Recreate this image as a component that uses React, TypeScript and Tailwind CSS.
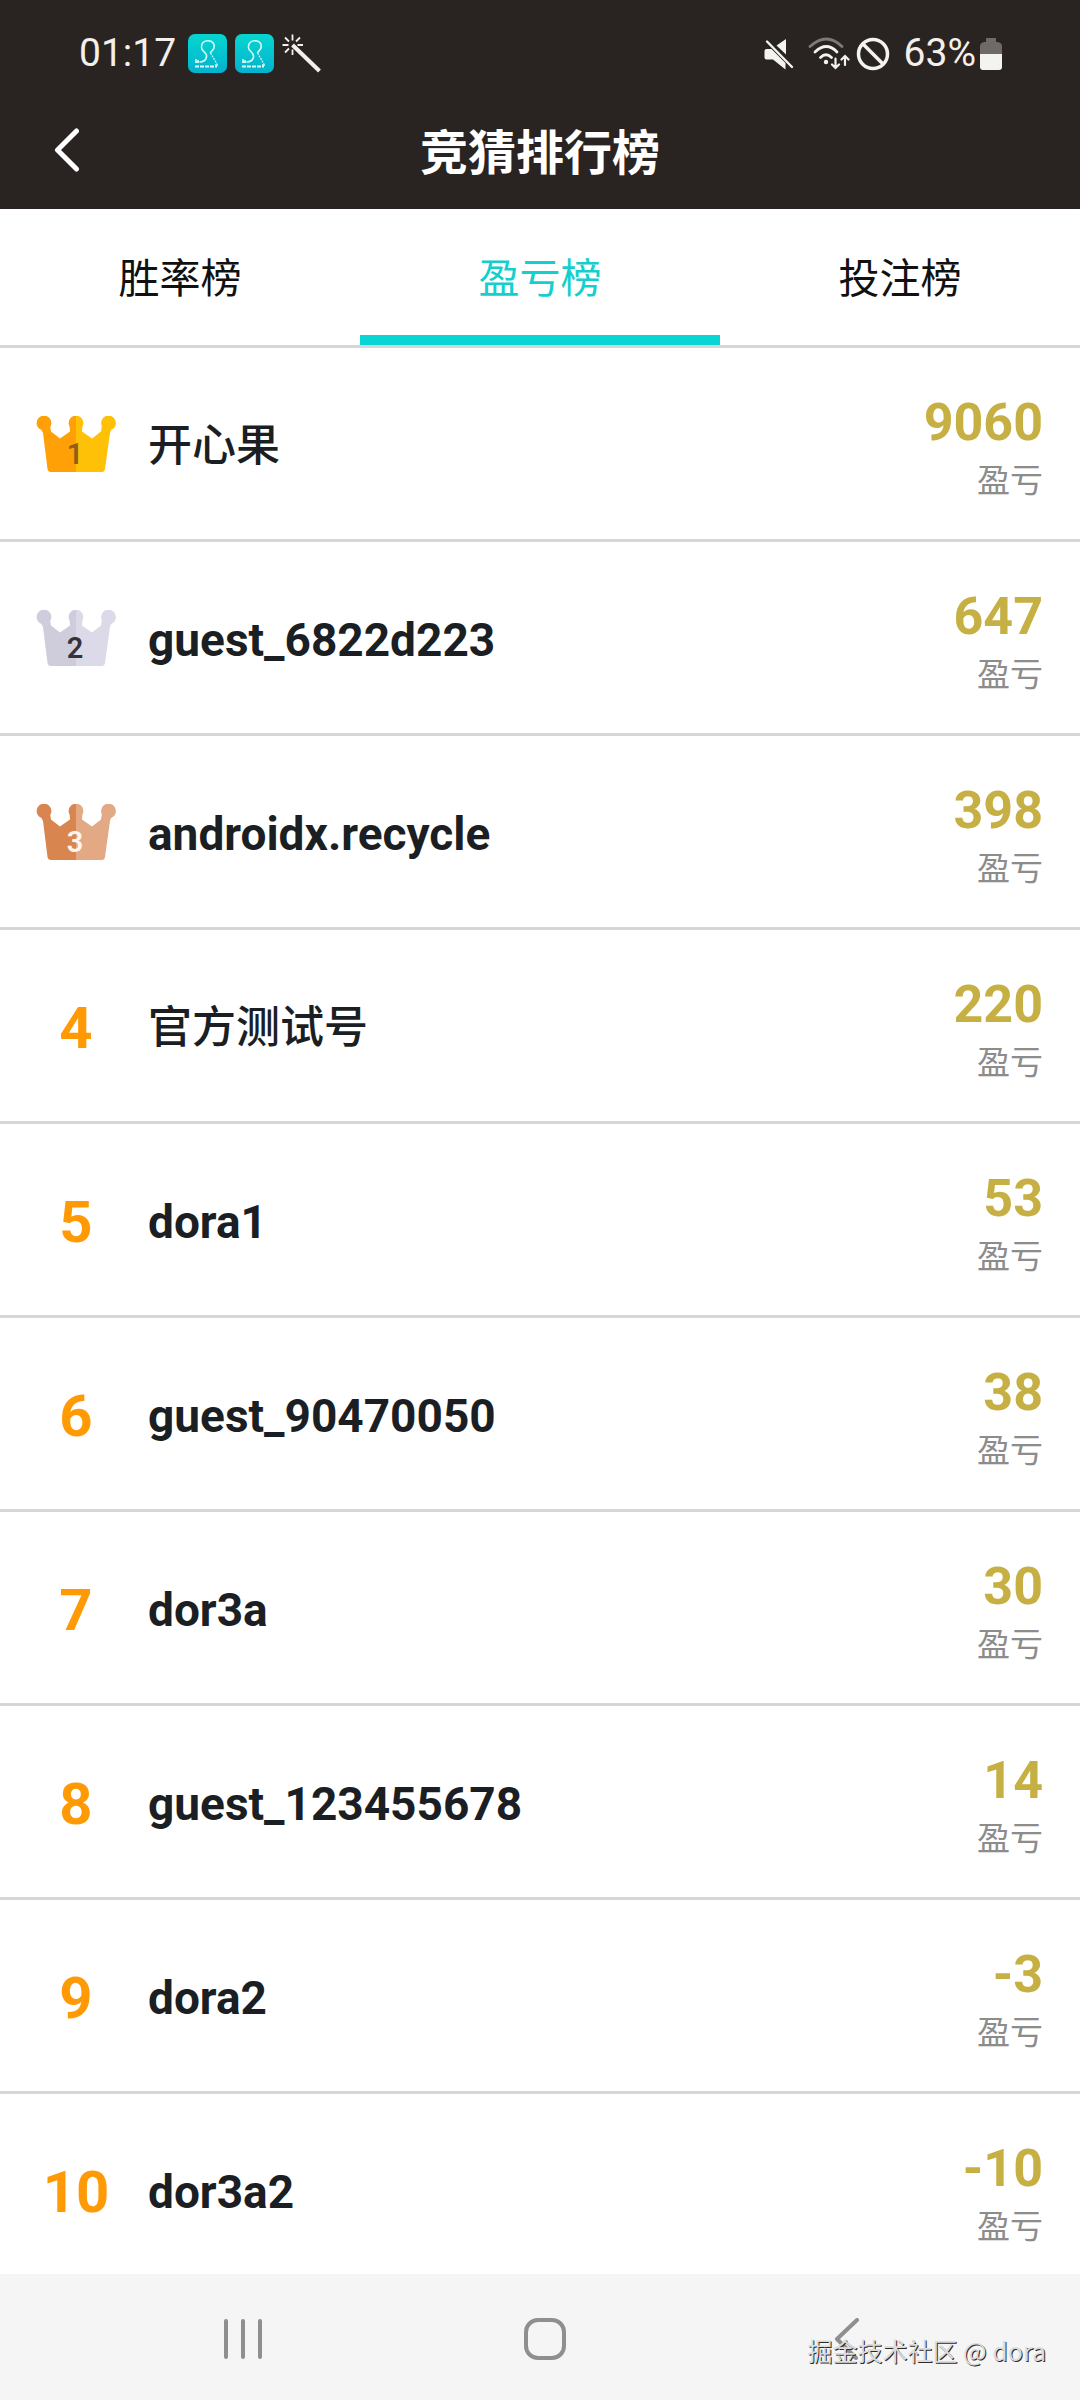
import React from "react";

interface Player {
  rank: number;
  name: string;
  score: string;
}

const players: Player[] = [
  { rank: 1, name: "开心果", score: "9060" },
  { rank: 2, name: "guest_6822d223", score: "647" },
  { rank: 3, name: "androidx.recycle", score: "398" },
  { rank: 4, name: "官方测试号", score: "220" },
  { rank: 5, name: "dora1", score: "53" },
  { rank: 6, name: "guest_90470050", score: "38" },
  { rank: 7, name: "dor3a", score: "30" },
  { rank: 8, name: "guest_123455678", score: "14" },
  { rank: 9, name: "dora2", score: "-3" },
  { rank: 10, name: "dor3a2", score: "-10" },
];

const tabs = ["胜率榜", "盈亏榜", "投注榜"];

const crownColors = [
  { left: "#ffa006", right: "#ffc107", digit: "#8f5f14" },
  { left: "#cfccdc", right: "#dcdae8", digit: "#33323c" },
  { left: "#d8854f", right: "#e3a985", digit: "#fff5ee" },
];

// Latin names are bold, Chinese names stay medium
const isLatin = (name: string) => /^[\x20-\x7e]+$/.test(name);

function Crown({ rank }: { rank: number }) {
  const c = crownColors[rank - 1];
  return (
    <svg viewBox="0 0 80 56" className="h-14 w-20" role="img" aria-label={`${rank}`}>
      <defs>
        <clipPath id={`crown-${rank}`}>
          <path d="M4 11 L14 9 L15 15.500 L24 22.500 L34 15.500 L33.500 9 H46.500 L46 15.500 L56 22.500 L65 15.500 L66 9 L76 11 L74 17 L69 53 Q68.500 56 66 56 H15 Q12 56 11.500 53 L7 17 Z" />
          <circle cx="8" cy="7" r="7.400" />
          <circle cx="40" cy="7" r="7.400" />
          <circle cx="72.500" cy="7" r="7.400" />
        </clipPath>
      </defs>
      <g clipPath={`url(#crown-${rank})`}>
        <rect width="40" height="56" fill={c.left} />
        <rect x="40" width="40" height="56" fill={c.right} />
      </g>
      <text x="39" y="48" textAnchor="middle" fontSize="29" fontWeight="600" fill={c.digit}>
        {rank}
      </text>
    </svg>
  );
}

function AppBadge() {
  return (
    <svg viewBox="0 0 39 39" className="size-[39px]" fill="none" aria-hidden="true">
      <defs>
        <linearGradient id="badge" x1="0" y1="0" x2="0" y2="1">
          <stop offset="0" stopColor="#06d6cf" />
          <stop offset="1" stopColor="#04b2cf" />
        </linearGradient>
      </defs>
      <rect width="39" height="39" rx="7" fill="url(#badge)" />
      <path
        d="M13.500 13.500C13 9 16 6.800 20 6.800c4.500 0 7 3 6 7-.8 3-3 3-3.500 5.200 M13.500 13.500c0 4 6 5 5 9.500-.8 3.500-3 5-7 5"
        stroke="#d9fbf8"
        strokeWidth="1.600"
      />
      <path d="M22.500 19l6.500 11" stroke="#d9fbf8" strokeWidth="1.200" strokeDasharray="2 1" />
      <path d="M8 25v4M10 26v3M7 28h4M27 31h3" stroke="#d9fbf8" strokeWidth="1.500" />
      <path d="M7 32.500h22" stroke="#d9fbf8" strokeWidth="1.800" strokeDasharray="4 1" />
    </svg>
  );
}

function WandIcon() {
  return (
    <svg viewBox="0 0 40 40" className="size-10" fill="none" stroke="#f3f0ec" aria-hidden="true">
      <path d="M10.500 11 L37.500 37" strokeWidth="4" />
      <path d="M10.500 0.500v6M10.500 15.500v5.500M0.500 11h6M15.500 11h5.500M3 3.500l4 4M18 3.500l-4 4M3 18.500l4-4" strokeWidth="1.800" />
    </svg>
  );
}

function MuteIcon() {
  return (
    <svg viewBox="0 0 30 32" className="h-8 w-[30px]" aria-hidden="true">
      <path d="M12.500 7.500 L22 1 V16.500 Z M0.500 13 Q0.500 11 2.500 11 H7.500 L21.500 25 V31.500 L9 21.500 H2.500 Q0.500 21.500 0.500 19.500 Z" fill="#f3f3ef" />
      <path d="M3 3.500 L28 29" stroke="#f3f3ef" strokeWidth="2.400" strokeLinecap="round" />
    </svg>
  );
}

function WifiIcon() {
  return (
    <svg viewBox="0 0 42 34" className="h-[34px] w-[42px]" fill="none" strokeLinecap="round" aria-hidden="true">
      <path d="M2 9.500 Q18.500 -5.500 34 9.500" stroke="#7d7975" strokeWidth="2.800" />
      <path d="M7 15 Q18.500 4 29 15 M12.500 20.500 Q18 15 23.500 20.500" stroke="#f3f3ef" strokeWidth="2.800" />
      <circle cx="18" cy="25" r="2.200" fill="#f3f3ef" />
      <path d="M27.500 21.500v9.500m-3.500-3.500l3.500 3.500 3.500-3.500M37 28v-9m-3.500 3.500l3.500-3.500 3.500 3.500" stroke="#f3f3ef" strokeWidth="2.200" />
    </svg>
  );
}

function StatusBar() {
  return (
    <div className="flex h-[107px] items-center justify-between pr-[78px] pl-[79px] text-[#f3f0ec]">
      <div className="flex items-center gap-3">
        <span className="text-[39px] leading-none">01:17</span>
        <div className="flex items-center gap-2">
          <AppBadge />
          <AppBadge />
          <WandIcon />
        </div>
      </div>
      <div className="flex items-center">
        <MuteIcon />
        <div className="flex items-center gap-1.5 pl-[14px]">
          <WifiIcon />
          <svg viewBox="0 0 34 34" className="size-[34px]" fill="none" stroke="#f3f3ef" strokeWidth="3.500" aria-hidden="true">
            <circle cx="17" cy="17" r="14.500" />
            <path d="M7 7l20 20" />
          </svg>
        </div>
        <span className="pl-[14px] text-[39px] leading-none">63%</span>
        <svg viewBox="0 0 22 34" className="ml-1 h-[34px] w-[22px]" aria-hidden="true">
          <path d="M6 1h10v4h2q4 1 4 4v8H0V9q0-3 4-4h2z" fill="#6f6a67" />
          <path d="M0 17h22v13q0 3-3 3H3q-3 0-3-3z" fill="#f3f3ef" />
        </svg>
      </div>
    </div>
  );
}

function PlayerRow({ player }: { player: Player }) {
  return (
    <li className="flex h-[194px] shrink-0 items-center border-b-[3px] border-[#d6d6d6] pr-[37px] pl-9">
      <div className="flex w-20 shrink-0 justify-center">
        {player.rank <= 3 ? (
          <Crown rank={player.rank} />
        ) : (
          <span className="pt-1 text-[58px] leading-none font-bold text-[#ff9a05]">{player.rank}</span>
        )}
      </div>
      <span
        className={`flex-1 truncate pt-1 pl-8 text-[#1b1f23] ${isLatin(player.name) ? "text-[46px] leading-[60px] font-bold" : "text-[44px] font-medium"}`}
      >
        {player.name}
      </span>
      <div className="flex flex-col items-end gap-1.5 pt-3">
        <span className="text-[52px] leading-[56px] font-bold text-[#c6b044]">{player.score}</span>
        <span className="text-[33px] leading-[48px] text-[#8c8c8c]">盈亏</span>
      </div>
    </li>
  );
}

export default function App() {
  return (
    <div className="flex h-screen flex-col overflow-hidden bg-white font-[Roboto,'Noto_Sans_CJK_SC',sans-serif]">
      <header className="shrink-0 bg-[#292421]">
        <StatusBar />
        <div className="grid h-[102px] grid-cols-[1fr_auto_1fr] items-center pb-4">
          <button type="button" aria-label="返回" className="flex w-fit pl-[54px]">
            <svg viewBox="0 0 26 44" className="h-11 w-[26px]" fill="none" stroke="white" strokeWidth="5" strokeLinecap="round" strokeLinejoin="round">
              <path d="M22.500 3L3.500 22l19 19" />
            </svg>
          </button>
          <h1 className="pt-2 text-5xl font-bold text-white">竞猜排行榜</h1>
        </div>
      </header>

      <nav className="grid shrink-0 grid-cols-3 border-b-[3px] border-[#d6d6d6]">
        {tabs.map((tab, i) => (
          <button
            key={tab}
            type="button"
            className={
              i === 1
                ? "h-[136px] border-b-[10px] border-[#09d6d4] pt-4 text-[41px] text-[#15cfcd]"
                : "h-[136px] border-b-[10px] border-transparent pt-4 text-[41px] text-[#111111]"
            }
          >
            {tab}
          </button>
        ))}
      </nav>

      <ol className="min-h-0 flex-1 overflow-hidden">
        {players.map((player) => (
          <PlayerRow key={player.rank} player={player} />
        ))}
      </ol>

      <footer className="relative grid h-[126px] shrink-0 grid-cols-3 items-center justify-items-center bg-[#f5f5f5] pt-1 pr-[82px] pl-[92px]">
        <button type="button" aria-label="最近任务">
          <svg viewBox="0 0 40 46" className="h-[46px] w-10" stroke="#8f8f8f" strokeWidth="4" strokeLinecap="round">
            <path d="M3 5v36M20 5v36M37 5v36" />
          </svg>
        </button>
        <button type="button" aria-label="主屏幕">
          <svg viewBox="0 0 42 42" className="size-[42px]" fill="none" stroke="#8f8f8f" strokeWidth="4">
            <rect x="2" y="2" width="38" height="38" rx="12" />
          </svg>
        </button>
        <button type="button" aria-label="返回">
          <svg viewBox="0 0 26 42" className="h-[42px] w-[26px]" fill="none" stroke="#8f8f8f" strokeWidth="4" strokeLinecap="round" strokeLinejoin="round">
            <path d="M23 2L3 21l19 19" />
          </svg>
        </button>
        <span className="absolute right-[34px] bottom-[34px] font-['Noto_Sans_CJK_SC',sans-serif] text-[25px] leading-8 text-[#dcdcdc] [text-shadow:1px_1px_0_#2b2b2b]">
          掘金技术社区 @ dora
        </span>
      </footer>
    </div>
  );
}
